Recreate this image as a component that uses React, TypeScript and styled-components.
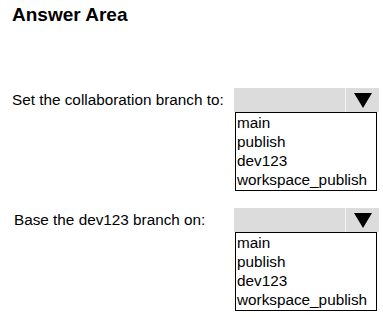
import React from "react";
import styled, { createGlobalStyle } from "styled-components";

const GlobalStyle = createGlobalStyle`
  body {
    margin: 0;
    background: #ffffff;
    font-family: "Liberation Sans", Arial, sans-serif;
    color: #000000;
  }
`;

const Page = styled.div`
  width: 383px;
  height: 317px;
  padding: 3px 0 0 12px;
  box-sizing: border-box;
`;

const Title = styled.h1`
  margin: 0;
  font-size: 19px;
  font-weight: bold;
  line-height: 24px;
`;

const Question = styled.div<{ $top: number }>`
  display: flex;
  align-items: flex-start;
  margin-top: ${(p) => p.$top}px;
`;

const Label = styled.div<{ $indent: number }>`
  width: ${(p) => 222 - p.$indent}px;
  padding-left: ${(p) => p.$indent}px;
  font-size: 15.3px;
  line-height: 18px;
  padding-top: 3px;
  white-space: nowrap;
`;

const Dropdown = styled.div`
  display: flex;
  flex-direction: column;
  width: 145px;
`;

const Header = styled.div`
  display: flex;
  height: 24px;
  background: #dcdcdc;
`;

const HeaderField = styled.div`
  flex: 1;
  border-right: 1px solid #f4f4f4;
`;

const ArrowBox = styled.div`
  width: 33px;
  display: flex;
  align-items: center;
  justify-content: center;
`;

const List = styled.ul`
  list-style: none;
  margin: 0 0 0 1px;
  padding: 0 0 1px 0;
  width: 142px;
  box-sizing: border-box;
  border: 1px solid #000000;
`;

const Item = styled.li`
  font-size: 15.3px;
  line-height: 19px;
  padding-left: 1px;
  white-space: nowrap;
`;

const Arrow = () => (
  <svg width="18" height="15" viewBox="0 0 18 15">
    <polygon points="0,0 18,0 9,15" fill="#000000" />
  </svg>
);

const options = ["main", "publish", "dev123", "workspace_publish"];

const Select: React.FC = () => (
  <Dropdown>
    <Header>
      <HeaderField />
      <ArrowBox>
        <Arrow />
      </ArrowBox>
    </Header>
    <List>
      {options.map((o) => (
        <Item key={o}>{o}</Item>
      ))}
    </List>
  </Dropdown>
);

export default function App() {
  return (
    <Page>
      <GlobalStyle />
      <Title>Answer Area</Title>
      <Question $top={61}>
        <Label $indent={0}>Set the collaboration branch to:</Label>
        <Select />
      </Question>
      <Question $top={17}>
        <Label $indent={2}>Base the dev123 branch on:</Label>
        <Select />
      </Question>
    </Page>
  );
}
